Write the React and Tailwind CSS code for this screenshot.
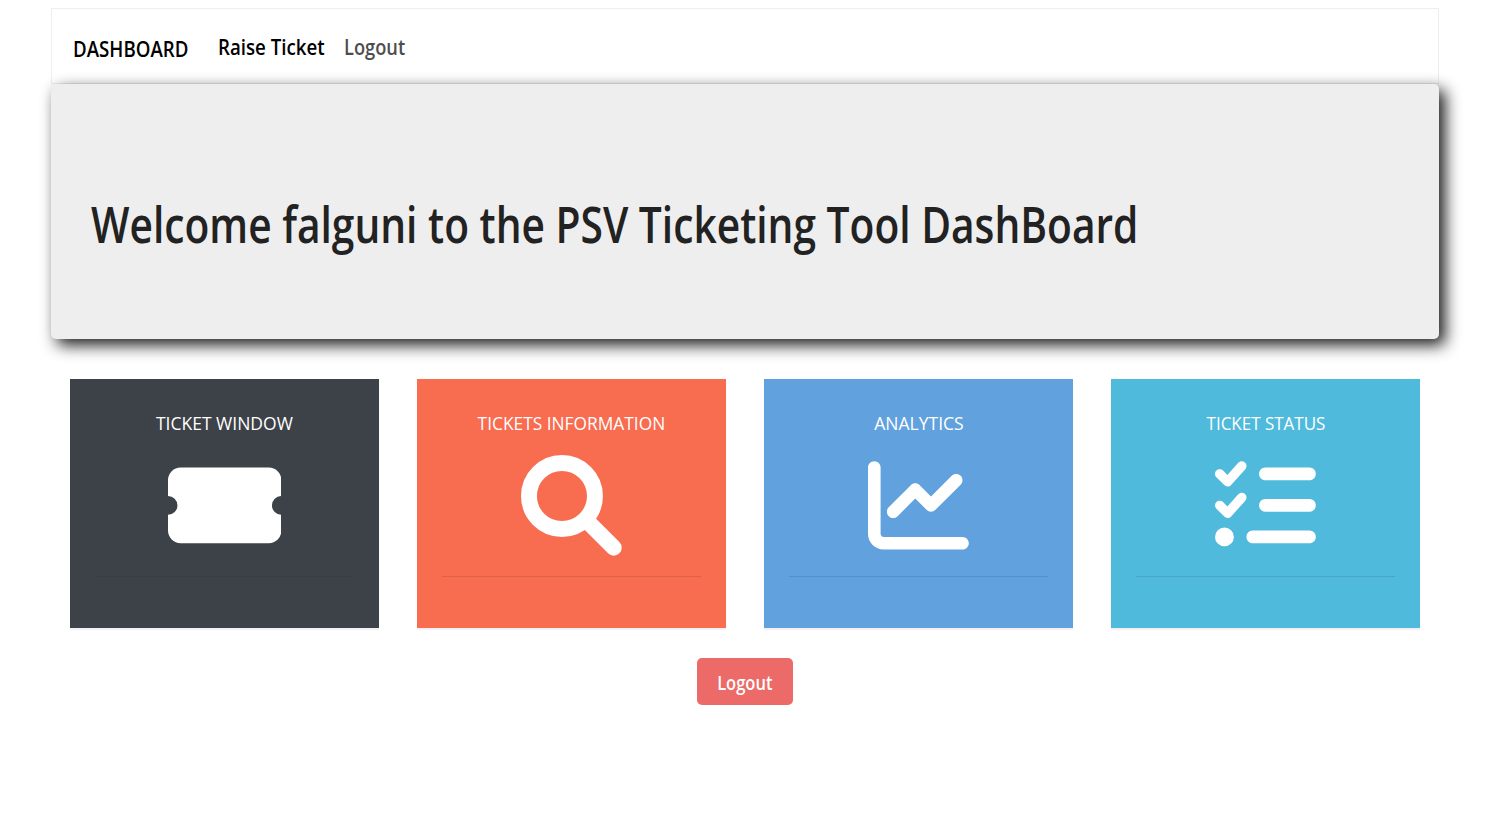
import { FaChartLine, FaListCheck } from "react-icons/fa6";

function TicketIcon({ className }) {
  return (
    <svg viewBox="0 0 576 512" fill="currentColor" className={className}>
      <path d="M0 128a64 64 0 0 1 64-64H512a64 64 0 0 1 64 64v80a48 48 0 0 0 0 96v80a64 64 0 0 1-64 64H64a64 64 0 0 1-64-64v-80a48 48 0 0 0 0-96z" />
    </svg>
  );
}

function SearchIcon({ className }) {
  return (
    <svg viewBox="0 0 512 512" fill="none" stroke="currentColor" strokeWidth="81" strokeLinecap="round" className={className}>
      <circle cx="208" cy="208" r="167.5" />
      <path d="M335 335L471 471" />
    </svg>
  );
}

const cards = [
  { title: "TICKET WINDOW", Icon: TicketIcon, bg: "bg-[#3d4148]", line: "bg-[#3a3d3e]", icon: "w-[113.4px]", text: "scale-x-[0.973]" },
  { title: "TICKETS INFORMATION", Icon: SearchIcon, bg: "bg-[#f86c50]", line: "bg-black/10", icon: "w-[100.8px]", text: "scale-x-[0.963]" },
  { title: "ANALYTICS", Icon: FaChartLine, bg: "bg-[#60a1de]", line: "bg-black/10", icon: "w-[100.8px]", text: "scale-x-[0.973]" },
  { title: "TICKET STATUS", Icon: FaListCheck, bg: "bg-[#4fbadc]", line: "bg-black/10", icon: "w-[100.8px]", text: "scale-x-[0.943]" },
];

function Card({ title, Icon, bg, line, icon, text }) {
  return (
    <section className={`flex h-[249px] flex-col items-center px-[25px] shadow-[0_2px_1px_rgba(50,20,50,0.06)] ${bg}`}>
      <h2 className={`mt-[31px] text-[18px] leading-[27px] whitespace-nowrap text-white ${text}`}>{title}</h2>
      <Icon className={`mt-[18.4px] h-[100.8px] shrink-0 text-white ${icon}`} />
      <div className={`mt-[19.8px] h-px w-full ${line}`} />
    </section>
  );
}

export default function App() {
  return (
    <div className="min-h-[821px] bg-white pt-2 pl-[51px] font-['Open_Sans',sans-serif]">
      <div className="w-[1388px]">
        <nav className="flex h-[76px] items-start border border-[#eeeeee] pl-[20.5px] font-semibold whitespace-nowrap text-black">
          <a className="mt-[23px] w-[145px] text-[22px] leading-[32px]"><span className="inline-block origin-left scale-x-[0.85]">DASHBOARD</span></a>
          <a className="mt-[21px] w-[126px] text-[22px] leading-[32px]"><span className="inline-block origin-left scale-x-[0.85]">Raise Ticket</span></a>
          <a className="mt-[21px] text-[22px] leading-[32px] text-[#4d4d4d]"><span className="inline-block origin-left scale-x-[0.83]">Logout</span></a>
        </nav>
        <header className="relative h-[255px] rounded-[5px] bg-[#eeeeee] pt-[103px] pl-[40px] shadow-[6px_6px_16px_rgba(0,0,0,0.9)]">
          <h1 className="inline-block origin-left scale-x-[0.798] text-[51px] leading-[72px] font-semibold whitespace-nowrap text-[#222222]">
            Welcome falguni to the PSV Ticketing Tool DashBoard
          </h1>
        </header>
        <main className="mt-10 grid grid-cols-4 gap-[38px] px-[19px]">
          {cards.map((card) => <Card key={card.title} {...card} />)}
        </main>
        <div className="mt-[30px] flex justify-center">
          <button className="h-[47px] w-[96px] rounded-[5px] bg-[#ec6a67] pt-[4px] text-[19px] font-semibold text-white">
            <span className="inline-block scale-x-[0.87]">Logout</span>
          </button>
        </div>
      </div>
    </div>
  );
}
